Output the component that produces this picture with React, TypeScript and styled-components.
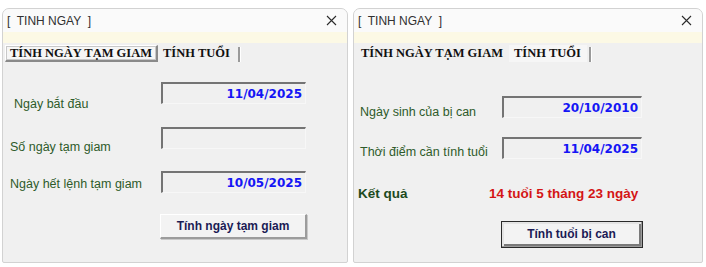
import React from 'react'
import styled, { createGlobalStyle } from 'styled-components'

const GlobalStyle = createGlobalStyle`
  html, body {
    margin: 0;
    padding: 0;
    background: #ffffff;
  }
  body {
    font-family: "Liberation Sans", Arial, sans-serif;
  }
`

const Page = styled.div`
  display: flex;
  gap: 5px;
  padding: 8px 0 0 2px;
  width: 706px;
  height: 267px;
  box-sizing: border-box;
`

const Window = styled.div<{ $width: number }>`
  width: ${(p) => p.$width}px;
  height: 255px;
  box-sizing: border-box;
  display: flex;
  flex-direction: column;
  background: #f0f0f0;
  border: 1px solid #d2d2d2;
  border-radius: 7px 7px 2px 2px;
  overflow: hidden;
`

const TitleBar = styled.div`
  height: 23px;
  display: flex;
  align-items: center;
  justify-content: space-between;
  padding: 0 10px 0 4px;
  background: #fafafa;
`

const Title = styled.span`
  font-family: "Liberation Sans", Arial, sans-serif;
  font-size: 12px;
  color: #303030;
  white-space: pre;
`

const CloseIcon = () => (
  <svg width="11" height="11" viewBox="0 0 11 11">
    <path d="M1 1 L10 10 M10 1 L1 10" stroke="#2b2b2b" strokeWidth="1.1" fill="none" />
  </svg>
)

const InfoStrip = styled.div`
  height: 11px;
  background: #fcf9e5;
`

const TabRow = styled.div`
  height: 19px;
  display: flex;
  align-items: flex-end;
  padding-left: 2px;
`

const Tab = styled.div<{ $active?: boolean; $framed?: boolean; $lift?: boolean }>`
  height: 17px;
  box-sizing: border-box;
  display: flex;
  align-items: ${(p) => (p.$lift ? 'flex-start' : 'center')};
  padding: 0 4px;
  font-family: "Liberation Serif", "Times New Roman", serif;
  font-weight: bold;
  font-size: 12.5px;
  color: #111111;
  white-space: nowrap;
  background: ${(p) => (p.$active ? '#f6f6f6' : 'transparent')};
  border-top: 1px solid ${(p) => (p.$framed ? '#ffffff' : 'transparent')};
  border-left: 1px solid ${(p) => (p.$framed ? '#ffffff' : 'transparent')};
  border-right: 2px solid ${(p) => (p.$framed ? '#8a8a8a' : 'transparent')};
  border-bottom: 2px solid ${(p) => (p.$framed ? '#8a8a8a' : 'transparent')};
  box-shadow: ${(p) => (p.$framed ? 'inset 0 0 0 1px #c8c8c8' : 'none')};
`

const TabDivider = styled.div`
  width: 2px;
  height: 15px;
  background: #9a9a9a;
  margin-left: 2px;
  border-right: 1px solid #ffffff;
`

const Body = styled.div<{ $top: number; $left: number }>`
  display: flex;
  flex-direction: column;
  padding: ${(p) => p.$top}px 0 0 ${(p) => p.$left}px;
`

const Row = styled.div<{ $gap?: number; $labelWidth: number }>`
  display: grid;
  grid-template-columns: ${(p) => p.$labelWidth}px auto;
  align-items: start;
  height: 22px;
  margin-top: ${(p) => p.$gap ?? 0}px;
`

const Label = styled.span<{ $drop: number; $indent?: number }>`
  margin-top: ${(p) => p.$drop}px;
  padding-left: ${(p) => p.$indent ?? 0}px;
  font-family: "Liberation Sans", Arial, sans-serif;
  font-size: 12.5px;
  line-height: 15px;
  color: #2e5b2a;
  white-space: nowrap;
`

const Field = styled.div<{ $width: number }>`
  width: ${(p) => p.$width}px;
  height: 22px;
  box-sizing: border-box;
  display: flex;
  align-items: center;
  justify-content: flex-end;
  padding-right: 3px;
  background: #f0f0f0;
  border-top: 2px solid #747474;
  border-left: 2px solid #747474;
  border-right: 1px solid #f7f7f7;
  border-bottom: 1px solid #f7f7f7;
  font-family: "DejaVu Sans", Verdana, sans-serif;
  font-weight: bold;
  font-size: 12px;
  color: #1515f5;
`

const ResultRow = styled.div<{ $gap: number; $labelWidth: number; $shift: number }>`
  display: grid;
  grid-template-columns: ${(p) => p.$labelWidth}px auto;
  align-items: center;
  height: 16px;
  margin-top: ${(p) => p.$gap}px;
  margin-left: ${(p) => p.$shift}px;
  font-family: "Liberation Sans", Arial, sans-serif;
  font-weight: bold;
  font-size: 13.5px;
  white-space: nowrap;
`

const ResultLabel = styled.span`
  color: #1d4a1d;
`

const ResultValue = styled.span`
  color: #d41515;
`

const ButtonRow = styled.div<{ $gap: number; $left: number }>`
  display: flex;
  margin-top: ${(p) => p.$gap}px;
  padding-left: ${(p) => p.$left}px;
`

const Button = styled.button<{ $width: number; $height: number; $default?: boolean }>`
  width: ${(p) => p.$width}px;
  height: ${(p) => p.$height}px;
  box-sizing: border-box;
  padding: 0;
  background: #f3f3f3;
  font-family: "Liberation Sans", Arial, sans-serif;
  font-weight: bold;
  font-size: 12px;
  color: #1b1b55;
  cursor: pointer;
  border-top: 1px solid #ffffff;
  border-left: 1px solid #ffffff;
  border-right: 2px solid #9c9c9c;
  border-bottom: 2px solid #9c9c9c;
  outline: ${(p) => (p.$default ? '1px solid #2a2a2a' : 'none')};
  outline-offset: -1px;
  box-shadow: ${(p) =>
    p.$default ? 'inset 2px 2px 0 #e4e4e4, inset -2px -2px 0 #7a7a7a' : '1px 1px 0 #c9c9c9'};
`

const DetentionWindow = () => (
  <Window $width={346}>
    <TitleBar>
      <Title>[  TINH NGAY  ]</Title>
      <CloseIcon />
    </TitleBar>
    <InfoStrip />
    <TabRow>
      <Tab $active $framed>TÍNH NGÀY TẠM GIAM</Tab>
      <Tab>TÍNH TUỔI</Tab>
      <TabDivider />
    </TabRow>
    <Body $top={20} $left={7}>
      <Row $labelWidth={151}>
        <Label $drop={15} $indent={4}>Ngày bắt đầu</Label>
        <Field $width={145}>11/04/2025</Field>
      </Row>
      <Row $gap={23} $labelWidth={151}>
        <Label $drop={13}>Số ngày tạm giam</Label>
        <Field $width={145} />
      </Row>
      <Row $gap={22} $labelWidth={151}>
        <Label $drop={6}>Ngày hết lệnh tạm giam</Label>
        <Field $width={145}>10/05/2025</Field>
      </Row>
      <ButtonRow $gap={21} $left={150}>
        <Button $width={147} $height={25}>Tính ngày tạm giam</Button>
      </ButtonRow>
    </Body>
  </Window>
)

const AgeWindow = () => (
  <Window $width={350}>
    <TitleBar>
      <Title>[  TINH NGAY  ]</Title>
      <CloseIcon />
    </TitleBar>
    <InfoStrip />
    <TabRow>
      <Tab>TÍNH NGÀY TẠM GIAM</Tab>
      <Tab $active $lift>TÍNH TUỔI</Tab>
      <TabDivider />
    </TabRow>
    <Body $top={34} $left={6}>
      <Row $labelWidth={142}>
        <Label $drop={9}>Ngày sinh của bị can</Label>
        <Field $width={140}>20/10/2010</Field>
      </Row>
      <Row $gap={19} $labelWidth={142}>
        <Label $drop={8}>Thời điểm cần tính tuổi</Label>
        <Field $width={140}>11/04/2025</Field>
      </Row>
      <ResultRow $gap={26} $labelWidth={131} $shift={-2}>
        <ResultLabel>Kết quả</ResultLabel>
        <ResultValue>14 tuổi 5 tháng 23 ngày</ResultValue>
      </ResultRow>
      <ButtonRow $gap={20} $left={141}>
        <Button $width={142} $height={27} $default>Tính tuổi bị can</Button>
      </ButtonRow>
    </Body>
  </Window>
)

export default function App() {
  return (
    <>
      <GlobalStyle />
      <Page>
        <DetentionWindow />
        <AgeWindow />
      </Page>
    </>
  )
}
